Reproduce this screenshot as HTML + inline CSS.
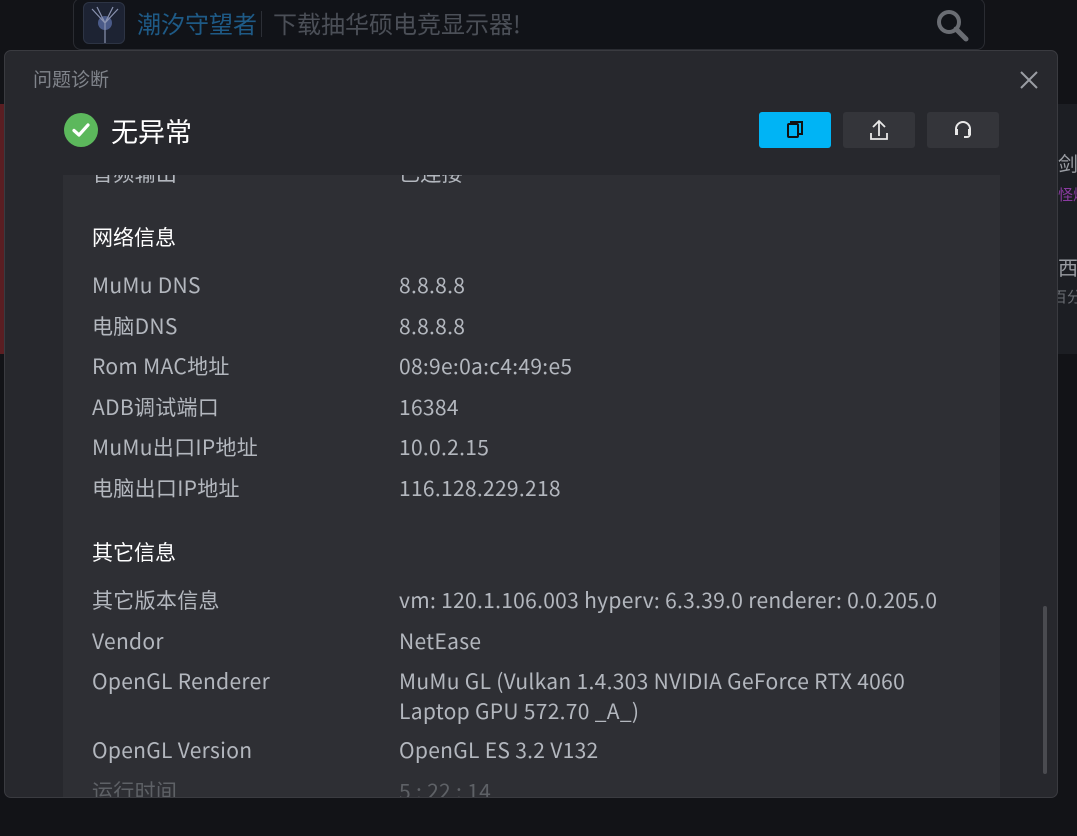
<!DOCTYPE html>
<html><head><meta charset="utf-8"><style>
*{margin:0;padding:0;box-sizing:border-box}
body{width:1077px;height:836px;overflow:hidden;background:#121317;font-family:"Noto Sans CJK SC","Liberation Sans",sans-serif;position:relative}
.top{position:absolute;left:73px;top:-2px;width:912px;height:52px;border:1px solid #2a2c32;border-radius:8px;background:#111318}
.top .av{position:absolute;left:9px;top:3px;width:42px;height:42px;border-radius:6px;background:#1d2333;border:1px solid #2d3444}
.top .t1{position:absolute;left:63px;top:6px;font-size:24px;color:#1e5a86}
.top .sep{position:absolute;left:187px;top:12px;width:1px;height:26px;background:#2c2f36}
.top .t2{position:absolute;left:199px;top:6px;font-size:24px;color:#4b4f57}
.rp{position:absolute;left:1058px;top:104px;width:19px;height:250px;background:#1c1e23;overflow:hidden}
.rp span{position:absolute;left:0;white-space:nowrap}
.red{position:absolute;left:0;top:104px;width:5px;height:250px;background:#5a1e22}
.dlg{position:absolute;left:4px;top:50px;width:1054px;height:748px;background:#27282d;border:1px solid #3a3b40;border-radius:7px;overflow:hidden}
.title{position:absolute;left:28px;top:14px;font-size:19px;color:#80848b;line-height:28px}
.status{position:absolute;left:106px;top:62px;font-size:27px;color:#fff;line-height:36px}
.chk{position:absolute;left:59px;top:62px;width:34px;height:34px;border-radius:50%;background:#5cb85c}
.btn{position:absolute;top:61px;width:72px;height:36px;border-radius:3px;background:#34353a}
.panel{position:absolute;left:58px;top:124px;width:937px;height:624px;background:#2e2f34;overflow:hidden}
.row{position:absolute;left:29px;font-size:21px;letter-spacing:0.3px;color:#b3b7be;white-space:nowrap;line-height:24px}
.row .v{position:absolute;left:307px;top:0}
.h{position:absolute;left:29px;font-size:21px;color:#fff;line-height:24px}
.sb{position:absolute;left:1043px;top:606px;width:4px;height:168px;border-radius:2px;background:#4a4b50}
</style></head><body>
<div class="top"><div class="av"><svg width="42" height="42"><circle cx="21" cy="20" r="7" fill="#4a5a88"/><path d="M21 20L8 6M21 20L34 6M21 20L13 4M21 20L29 4M21 20V40" stroke="#8a93b0" stroke-width="1.2"/></svg></div><div class="t1">潮汐守望者</div><div class="sep"></div><div class="t2">下载抽华硕电竞显示器!</div>
<svg style="position:absolute;left:860px;top:8px" width="36" height="36"><circle cx="15" cy="15" r="10" stroke="#6a6d73" stroke-width="4" fill="none"/><path d="M22 22L32 32" stroke="#6a6d73" stroke-width="5" stroke-linecap="round"/></svg></div>
<div class="red"></div>
<div class="rp"><span style="top:44px;font-size:20px;color:#9a9da3">剑</span><span style="top:80px;font-size:15px;color:#8a3aa0">怪爆</span><span style="top:148px;font-size:20px;color:#9a9da3">西</span><span style="top:182px;font-size:15px;color:#6a6d73;left:-6px">百分</span></div>
<div class="dlg">
<div class="title">问题诊断</div>
<svg style="position:absolute;left:1014px;top:19px" width="20" height="20"><path d="M2 2L18 18M18 2L2 18" stroke="#9a9da3" stroke-width="2"/></svg>
<div class="chk"><svg width="34" height="34"><path d="M10 17.5L15 22L24 12" stroke="#fff" stroke-width="3.2" fill="none" stroke-linecap="round" stroke-linejoin="round"/></svg></div>
<div class="status">无异常</div>
<div class="btn" style="left:754px;background:#00b4f5"><svg width="72" height="36"><rect x="29" y="12" width="10" height="13" rx="1" fill="none" stroke="#111" stroke-width="2"/><path d="M32 12V10H43V22H39" fill="none" stroke="#111" stroke-width="2"/></svg></div>
<div class="btn" style="left:838px"><svg width="72" height="36"><path d="M36 9V24M30 15L36 9L42 15M28 21V27H44V21" fill="none" stroke="#e8e8e8" stroke-width="1.8"/></svg></div>
<div class="btn" style="left:922px"><svg width="72" height="36"><path d="M29 22V17A7 7 0 0 1 43 17V22M37 25H40A3 3 0 0 0 43 22" fill="none" stroke="#e8e8e8" stroke-width="2"/><rect x="28" y="17" width="3" height="6" fill="#e8e8e8"/><rect x="41" y="17" width="3" height="6" fill="#e8e8e8"/></svg></div>
<div class="panel">
<div class="row" style="top:-14px">音频输出<span class="v">已连接</span></div>
<div class="h" style="top:50px">网络信息</div>
<div class="row" style="top:98px">MuMu DNS<span class="v">8.8.8.8</span></div>
<div class="row" style="top:139px">电脑DNS<span class="v">8.8.8.8</span></div>
<div class="row" style="top:179px">Rom MAC地址<span class="v">08:9e:0a:c4:49:e5</span></div>
<div class="row" style="top:220px">ADB调试端口<span class="v">16384</span></div>
<div class="row" style="top:260px">MuMu出口IP地址<span class="v">10.0.2.15</span></div>
<div class="row" style="top:301px">电脑出口IP地址<span class="v">116.128.229.218</span></div>
<div class="h" style="top:365px">其它信息</div>
<div class="row" style="top:413px">其它版本信息<span class="v">vm: 120.1.106.003 hyperv: 6.3.39.0 renderer: 0.0.205.0</span></div>
<div class="row" style="top:454px">Vendor<span class="v">NetEase</span></div>
<div class="row" style="top:494px">OpenGL Renderer<span class="v" style="line-height:30px;top:-3px">MuMu GL (Vulkan 1.4.303 NVIDIA GeForce RTX 4060<br>Laptop GPU 572.70 _A_)</span></div>
<div class="row" style="top:563px">OpenGL Version<span class="v">OpenGL ES 3.2 V132</span></div>
<div class="row" style="top:604px;color:#5e6166">运行时间<span class="v">5 : 22 : 14</span></div>
</div>
</div>
<div class="sb"></div>
</body></html>
